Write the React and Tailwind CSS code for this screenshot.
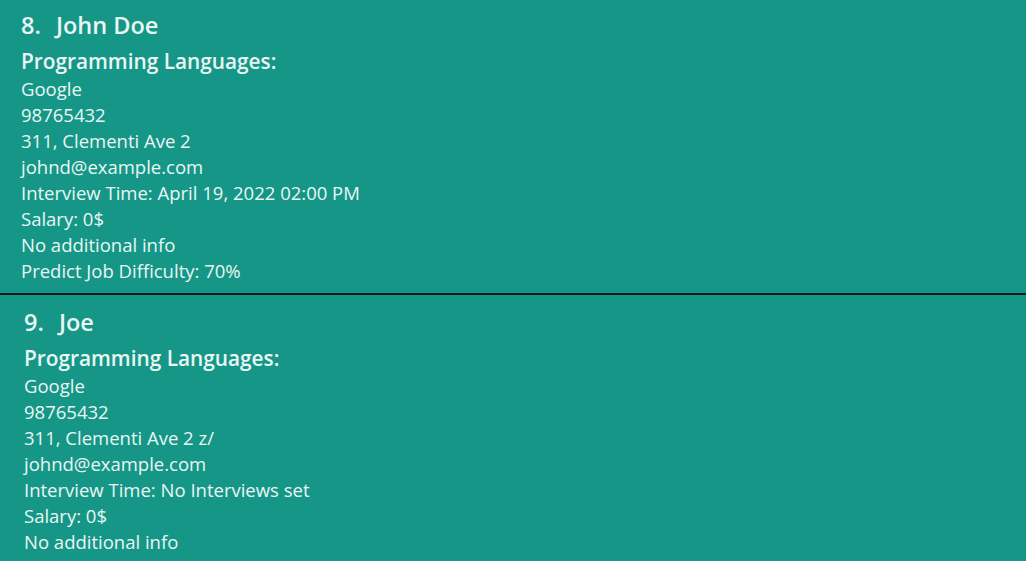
const people = [
  {
    index: 8,
    name: "John Doe",
    lines: [
      "Google",
      "98765432",
      "311, Clementi Ave 2",
      "johnd@example.com",
      "Interview Time: April 19, 2022 02:00 PM",
      "Salary: 0$",
      "No additional info",
      "Predict Job Difficulty: 70%",
    ],
    pad: "pl-[21px] pt-[9px]",
  },
  {
    index: 9,
    name: "Joe",
    lines: [
      "Google",
      "98765432",
      "311, Clementi Ave 2 z/",
      "johnd@example.com",
      "Interview Time: No Interviews set",
      "Salary: 0$",
      "No additional info",
    ],
    pad: "pl-[24px] pt-[11px]",
  },
];

export default function App() {
  return (
    <div className="w-[1026px] h-[561px] overflow-hidden bg-[#159687] text-[#e9f6f3] font-['Open_Sans',sans-serif]">
      {people.map((p, i) => (
        <div key={p.index} className={i > 0 ? "border-t-2 border-[#0a1a17]" : ""}>
          <PersonCard person={p} />
        </div>
      ))}
    </div>
  );
}

function PersonCard({ person }) {
  return (
    <div className={`${person.pad} pb-[9px]`}>
      <div className="flex gap-[15px] text-[23.5px] leading-[32px] font-semibold">
        <span>{person.index}.</span>
        <span>{person.name}</span>
      </div>
      <div className="text-[20.8px] leading-[30px] font-semibold mt-[5px]">Programming Languages:</div>
      {person.lines.map((line) => (
        <div key={line} className="text-[18.5px] leading-[26px]">
          {line}
        </div>
      ))}
    </div>
  );
}
